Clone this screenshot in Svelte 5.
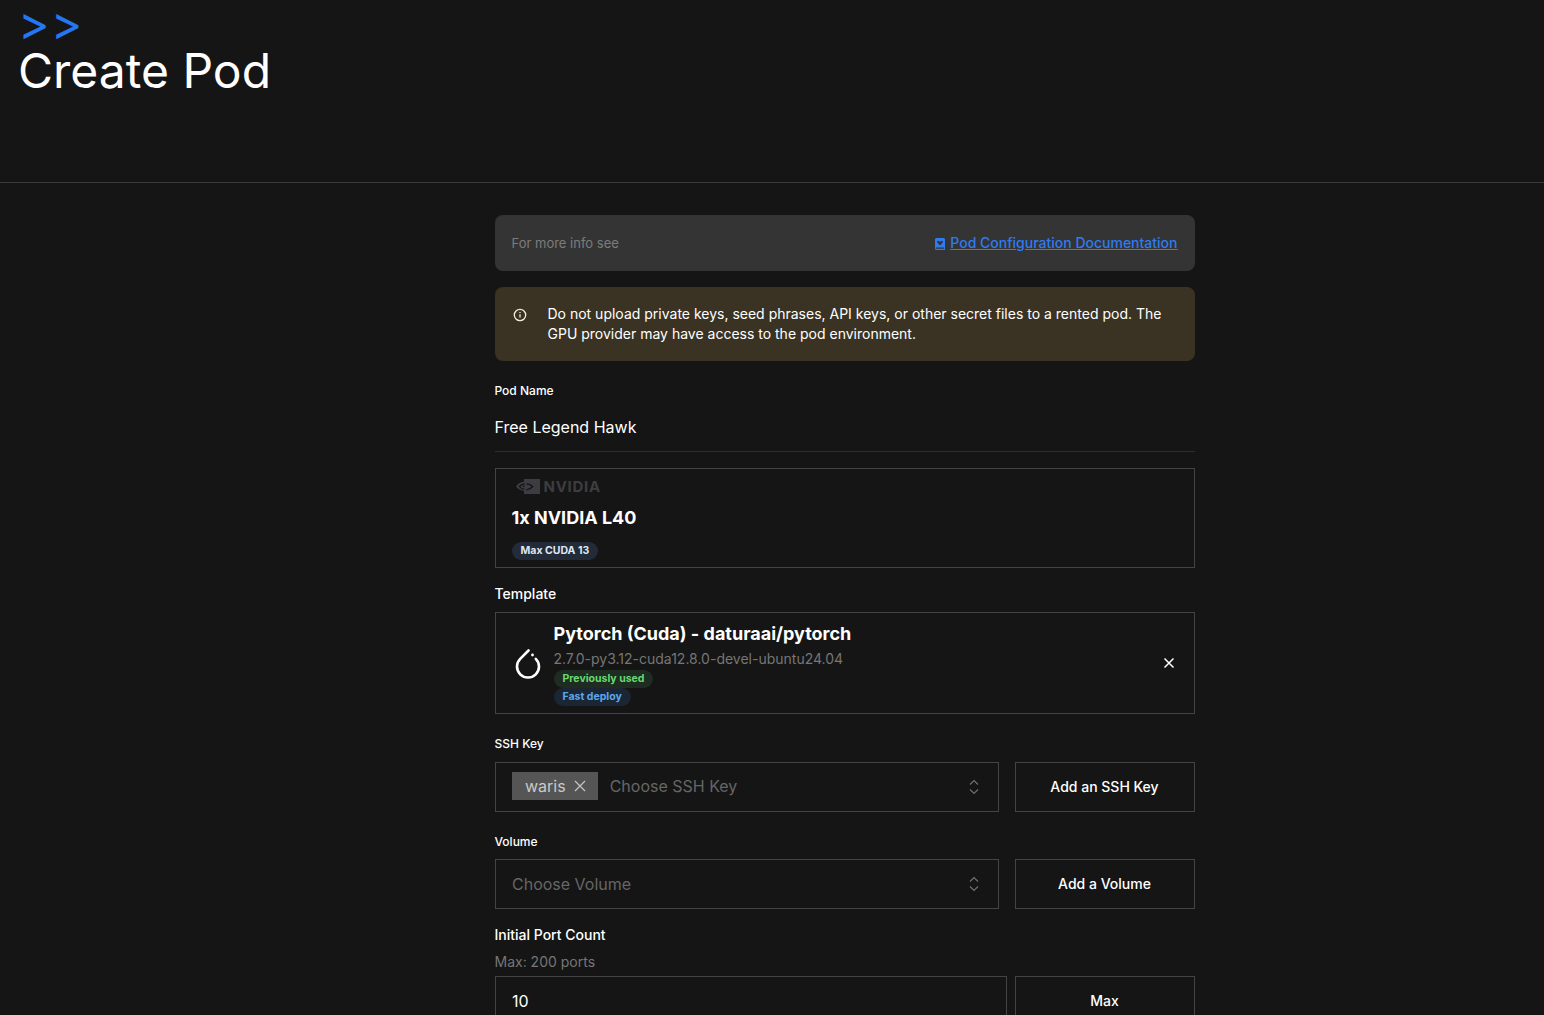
<script lang="ts">
    let podName = "Free Legend Hawk";
    let portCount = "10";
</script>

<div class="page">
    <header class="top">
        <div class="chev">&gt;&gt;</div>
        <h1>Create Pod</h1>
    </header>

    <main class="form">
        <div class="note">
            <span>For more info see</span>
            <a href="#docs" class="doclink">
                <svg width="10" height="12" viewBox="0 0 11 12" preserveAspectRatio="none"><path fill="#2f7bf0" fill-rule="evenodd" d="M1.500 0h8A1.500 1.500 0 0 1 11 1.500V12H1.500A1.500 1.500 0 0 1 0 10.500v-9A1.500 1.500 0 0 1 1.500 0zM1.500 9.400a.7.7 0 0 0 0 1.400H10V9.400zM5.500 7.500 8.300 4.700a1.100 1.100 0 0 0 0-1.600 1.200 1.200 0 0 0-1.700 0l-1.100 1-1.100-1a1.200 1.200 0 0 0-1.700 0 1.100 1.100 0 0 0 0 1.600z"/></svg>
                <span>Pod Configuration Documentation</span>
            </a>
        </div>

        <div class="warn">
            <svg class="warn-ico" width="14" height="14" viewBox="0 0 14 14" fill="none" stroke="#f2ecd9" stroke-width="1.300"><circle cx="7" cy="7" r="5.700"/><path d="M7 6.300v3.200M7 4.100v1"/></svg>
            <p>Do not upload private keys, seed phrases, API keys, or other secret files to a rented pod. The GPU provider may have access to the pod environment.</p>
        </div>

        <label class="lbl-sm first" for="podname">Pod Name</label>
        <input id="podname" class="name" bind:value={podName} />

        <div class="gpu">
            <div class="nv">
                <svg width="25" height="17" viewBox="0 0 25 17">
                    <path fill="#3d3d41" d="M8 1h16v15H8v-3C4 12.500 1.500 10.500 0 8.500 1.500 6 4 4 8 3.500z"/>
                    <path fill="none" stroke="#151515" stroke-width="1.300" d="M8.500 6C5.800 6.300 4.200 7.400 3.400 8.500 4.400 10 6 11 8.500 11.300M10.500 5.800c2.800.2 4.800 1.300 6.200 2.700-1.400 1.800-3.700 3-6.200 3.300M8.500 8.200C8 8.300 7.500 8.400 7.100 8.600"/>
                </svg>
                <span>NVIDIA</span>
            </div>
            <div class="gpu-title">1x NVIDIA L40</div>
            <span class="pill slate">Max CUDA 13</span>
        </div>

        <div class="lbl-md tpl-lbl">Template</div>
        <div class="tpl">
            <svg class="flame" width="26" height="30" viewBox="0 0 26 30" fill="none" stroke="#fff" stroke-width="2.600" stroke-linecap="round"><path d="M13.500 1.500 5.200 9.800a11 11 0 1 0 15.600 0"/><circle cx="17.500" cy="6" r="1.400" fill="#fff" stroke="none"/></svg>
            <div class="tpl-body">
                <div class="tpl-title">Pytorch (Cuda) - daturaai/pytorch</div>
                <div class="tpl-tag">2.7.0-py3.12-cuda12.8.0-devel-ubuntu24.04</div>
                <div class="pills">
                    <span class="pill green">Previously used</span>
                    <span class="pill blue">Fast deploy</span>
                </div>
            </div>
            <svg class="close" width="12" height="12" viewBox="0 0 12 12" stroke="#fff" stroke-width="1.500"><path d="M1.500 1.500l9 9M10.500 1.500l-9 9"/></svg>
        </div>

        <div class="lbl-sm ssh-lbl">SSH Key</div>
        <div class="row">
            <div class="select">
                <span class="chip">waris
                    <svg width="12" height="12" viewBox="0 0 12 12" stroke="#c6c6c6" stroke-width="1.200"><path d="M1 1l10 10M11 1 1 11"/></svg>
                </span>
                <span class="ph">Choose SSH Key</span>
                <svg class="updown" width="10" height="16" viewBox="0 0 10 16" fill="none" stroke="#6f6f6f" stroke-width="1.200"><path d="M1 5.500 5 1.500l4 4M1 10.500l4 4 4-4"/></svg>
            </div>
            <button class="btn">Add an SSH Key</button>
        </div>

        <div class="lbl-sm vol-lbl">Volume</div>
        <div class="row">
            <div class="select">
                <span class="ph solo">Choose Volume</span>
                <svg class="updown" width="10" height="16" viewBox="0 0 10 16" fill="none" stroke="#6f6f6f" stroke-width="1.200"><path d="M1 5.500 5 1.500l4 4M1 10.500l4 4 4-4"/></svg>
            </div>
            <button class="btn">Add a Volume</button>
        </div>

        <div class="lbl-md port-lbl">Initial Port Count</div>
        <div class="hint">Max: 200 ports</div>
        <div class="row port">
            <input class="count" bind:value={portCount} />
            <button class="btn">Max</button>
        </div>
    </main>
</div>

<style>
    :global(body) {
        margin: 0;
        background: #151515;
        overflow: hidden;
    }

    .page {
        height: 1015px;
        overflow: hidden;
        background: #151515;
        color: #fff;
        font-family: Inter, "Liberation Sans", sans-serif;
    }

    .top {
        height: 182px;
        box-sizing: content-box;
        border-bottom: 1px solid #3a3a3a;
        padding-left: 18px;
    }

    .chev {
        color: #2477f2;
        font-size: 48px;
        height: 31px;
        line-height: 28px;
        padding-top: 9px;
        letter-spacing: 1px;
        font-weight: 400;
    }

    h1 {
        margin: 0;
        font-size: 48px;
        font-weight: 400;
        line-height: 62px;
        height: 62px;
    }

    .form {
        width: 700px;
        margin: 32px 0 0 494.5px;
    }

    .note {
        display: flex;
        justify-content: space-between;
        align-items: center;
        height: 56px;
        box-sizing: border-box;
        padding: 0 17px 0 17px;
        background: #343434;
        border-radius: 8px;
        font-size: 13px;
        color: #7c7c7c;
    }

    .doclink {
        display: flex;
        align-items: center;
        gap: 5px;
        color: #2f7bf0;
        font-size: 14px;
        font-weight: 500;
        margin-bottom: 2px;
    }

    .doclink svg {
        margin-top: 3px;
    }

    .doclink span {
        text-decoration: underline;
    }

    .warn {
        display: flex;
        margin-top: 16px;
        height: 74px;
        box-sizing: border-box;
        padding: 17px 28px 0 18px;
        background: #3a3323;
        border-radius: 8px;
    }

    .warn-ico {
        flex: none;
        margin: 4px 21px 0 0;
    }

    .warn p {
        margin: 0;
        font-size: 14px;
        line-height: 20px;
        color: #fff;
    }

    .lbl-sm {
        display: block;
        font-size: 12px;
        font-weight: 500;
        line-height: 16px;
        color: #fff;
    }

    .lbl-md {
        font-size: 14px;
        font-weight: 500;
        line-height: 18px;
    }

    .first {
        margin-top: 22px;
    }

    .name {
        display: block;
        width: 100%;
        box-sizing: border-box;
        height: 47px;
        margin-top: 6px;
        padding: 0 0 3px;
        border: 0;
        border-bottom: 1px solid #2e2e2e;
        background: none;
        color: #fff;
        font: 16px Inter, sans-serif;
        outline: none;
    }

    .gpu {
        margin-top: 16px;
        height: 100px;
        box-sizing: border-box;
        border: 1px solid #444;
        padding: 7px 16px;
    }

    .nv {
        display: flex;
        align-items: center;
        gap: 3px;
        height: 20px;
        padding-left: 4px;
        color: #3d3d41;
        font-size: 15px;
        font-weight: 700;
        letter-spacing: 0.7px;
    }

    .gpu-title {
        margin-top: 10px;
        font-size: 18px;
        font-weight: 700;
        line-height: 24px;
    }

    .pill {
        display: block;
        width: fit-content;
        box-sizing: border-box;
        height: 18px;
        line-height: 18px;
        padding: 0 9px;
        border-radius: 9px;
        font-size: 10.500px;
        font-weight: 700;
    }

    .gpu .pill {
        margin-top: 12px;
    }

    .slate {
        background: #232b38;
        color: #dde6f2;
    }

    .green {
        background: #1e2c22;
        color: #69d96f;
    }

    .blue {
        background: #1b2634;
        color: #5ba8f0;
    }

    .tpl-lbl {
        margin-top: 17px;
    }

    .tpl {
        display: flex;
        align-items: center;
        margin-top: 9px;
        height: 102px;
        box-sizing: border-box;
        border: 1px solid #444;
        padding-left: 19px;
    }

    .flame {
        flex: none;
        margin: 2px 13px 0 0;
    }

    .tpl-body {
        flex: 1;
        align-self: flex-start;
        padding-top: 9px;
    }

    .tpl-title {
        font-size: 18px;
        font-weight: 700;
        line-height: 24px;
    }

    .tpl-tag {
        font-size: 14px;
        line-height: 20px;
        margin-top: 3px;
        color: #767676;
    }

    .pills {
        margin-top: 1px;
    }

    .close {
        flex: none;
        margin-right: 19px;
    }

    .ssh-lbl {
        margin-top: 22px;
    }

    .row {
        display: flex;
        gap: 16px;
        margin-top: 10px;
    }

    .select {
        display: flex;
        align-items: center;
        width: 504px;
        height: 50px;
        box-sizing: border-box;
        border: 1px solid #444;
        padding: 0 19px 0 16.500px;
        font-size: 16px;
    }

    .chip {
        display: flex;
        align-items: center;
        gap: 8px;
        height: 28px;
        margin-bottom: 2px;
        padding: 0 12px 0 13px;
        background: #555;
        color: #c9c9c9;
    }

    .ph {
        margin: 0 0 2px 12px;
        color: #666;
    }

    .ph.solo {
        margin: 0;
    }

    .updown {
        margin-left: auto;
    }

    .btn {
        width: 180px;
        height: 50px;
        box-sizing: border-box;
        padding-bottom: 3px;
        background: none;
        border: 1px solid #444;
        color: #fff;
        font: 500 14px Inter, sans-serif;
    }

    .vol-lbl {
        margin-top: 22px;
    }

    .vol-lbl + .row {
        margin-top: 9px;
    }

    .port-lbl {
        margin-top: 17px;
    }

    .hint {
        font-size: 14px;
        line-height: 20px;
        margin-top: 8px;
        color: #767676;
    }

    .port {
        gap: 8px;
        margin-top: 4px;
    }

    .count {
        width: 512px;
        height: 50px;
        box-sizing: border-box;
        border: 1px solid #444;
        background: none;
        padding: 0 16.500px;
        color: #fff;
        font: 16px Inter, sans-serif;
        outline: none;
    }
</style>
